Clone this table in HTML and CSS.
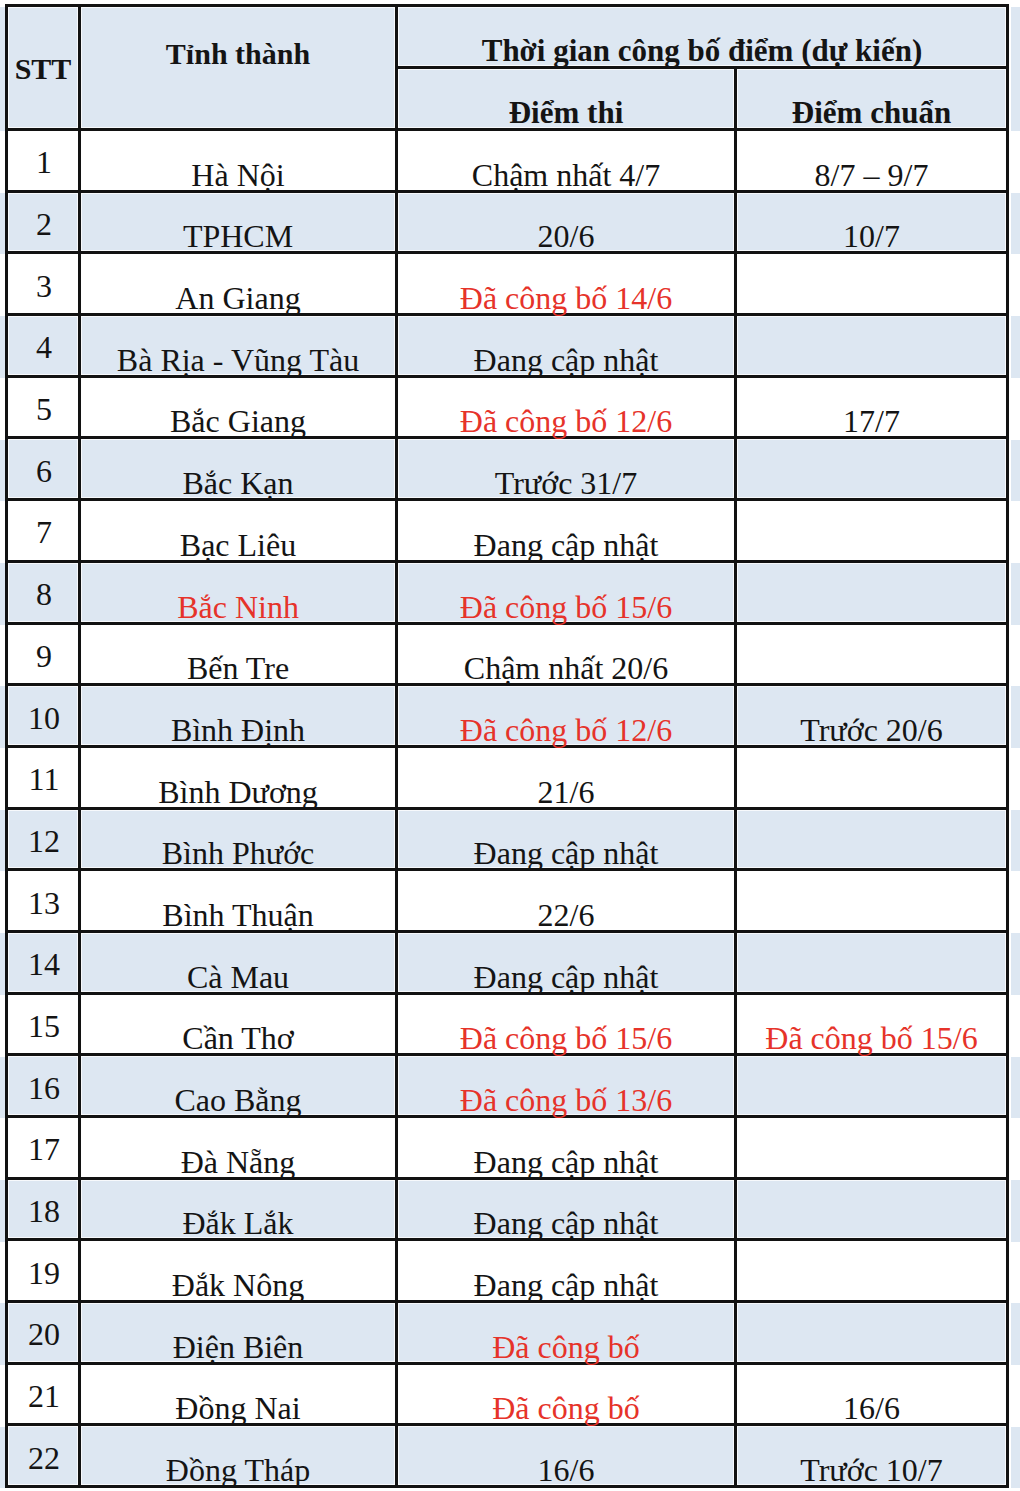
FILE: index.html
```html
<!DOCTYPE html>
<html lang="vi">
<head>
<meta charset="utf-8">
<title>Thời gian công bố điểm</title>
<link rel="stylesheet" href="styles.css">
</head>
<body>
<div class="sheet">
  <div class="cell head stt-head">STT</div>
  <div class="cell head city-head">Tỉnh thành</div>
  <div class="cell head time-head">Thời gian công bố điểm (dự kiến)</div>
  <div class="cell head sub-head">Điểm thi</div>
  <div class="cell head sub-head">Điểm chuẩn</div>

  <div class="cell num">1</div><div class="cell">Hà Nội</div><div class="cell">Chậm nhất 4/7</div><div class="cell">8/7 – 9/7</div>
  <div class="cell num alt">2</div><div class="cell alt">TPHCM</div><div class="cell alt">20/6</div><div class="cell alt">10/7</div>
  <div class="cell num">3</div><div class="cell">An Giang</div><div class="cell red">Đã công bố 14/6</div><div class="cell"></div>
  <div class="cell num alt">4</div><div class="cell alt">Bà Rịa - Vũng Tàu</div><div class="cell alt">Đang cập nhật</div><div class="cell alt"></div>
  <div class="cell num">5</div><div class="cell">Bắc Giang</div><div class="cell red">Đã công bố 12/6</div><div class="cell">17/7</div>
  <div class="cell num alt">6</div><div class="cell alt">Bắc Kạn</div><div class="cell alt">Trước 31/7</div><div class="cell alt"></div>
  <div class="cell num">7</div><div class="cell">Bạc Liêu</div><div class="cell">Đang cập nhật</div><div class="cell"></div>
  <div class="cell num alt">8</div><div class="cell alt red">Bắc Ninh</div><div class="cell alt red">Đã công bố 15/6</div><div class="cell alt"></div>
  <div class="cell num">9</div><div class="cell">Bến Tre</div><div class="cell">Chậm nhất 20/6</div><div class="cell"></div>
  <div class="cell num alt">10</div><div class="cell alt">Bình Định</div><div class="cell alt red">Đã công bố 12/6</div><div class="cell alt">Trước 20/6</div>
  <div class="cell num">11</div><div class="cell">Bình Dương</div><div class="cell">21/6</div><div class="cell"></div>
  <div class="cell num alt">12</div><div class="cell alt">Bình Phước</div><div class="cell alt">Đang cập nhật</div><div class="cell alt"></div>
  <div class="cell num">13</div><div class="cell">Bình Thuận</div><div class="cell">22/6</div><div class="cell"></div>
  <div class="cell num alt">14</div><div class="cell alt">Cà Mau</div><div class="cell alt">Đang cập nhật</div><div class="cell alt"></div>
  <div class="cell num">15</div><div class="cell">Cần Thơ</div><div class="cell red">Đã công bố 15/6</div><div class="cell red">Đã công bố 15/6</div>
  <div class="cell num alt">16</div><div class="cell alt">Cao Bằng</div><div class="cell alt red">Đã công bố 13/6</div><div class="cell alt"></div>
  <div class="cell num">17</div><div class="cell">Đà Nẵng</div><div class="cell">Đang cập nhật</div><div class="cell"></div>
  <div class="cell num alt">18</div><div class="cell alt">Đắk Lắk</div><div class="cell alt">Đang cập nhật</div><div class="cell alt"></div>
  <div class="cell num">19</div><div class="cell">Đắk Nông</div><div class="cell">Đang cập nhật</div><div class="cell"></div>
  <div class="cell num alt">20</div><div class="cell alt">Điện Biên</div><div class="cell alt red">Đã công bố</div><div class="cell alt"></div>
  <div class="cell num">21</div><div class="cell">Đồng Nai</div><div class="cell red">Đã công bố</div><div class="cell">16/6</div>
  <div class="cell num alt">22</div><div class="cell alt">Đồng Tháp</div><div class="cell alt">16/6</div><div class="cell alt">Trước 10/7</div>
</div>
</body>
</html>
```

FILE: styles.css
```css
html, body {
  margin: 0;
  padding: 0;
}

body {
  width: 1020px;
  height: 1491px;
  overflow: hidden;
  font-family: "Liberation Serif", "Times New Roman", serif;
  color: #141414;
  background-color: #fff;
  background-image:
    linear-gradient(to right, transparent 1009px, #fff 1009px, #fff 1011px, transparent 1011px),
    linear-gradient(to bottom, #fff 0, #fff 7px, #dde7f2 7px, #dde7f2 131px),
    repeating-linear-gradient(to bottom, #fff 0, #fff 61.7px, #dde7f2 61.7px, #dde7f2 123.4px);
  background-size: 100% 100%, 100% 131px, 100% 100%;
  background-position: 0 0, 0 0, 0 131px;
  background-repeat: no-repeat, no-repeat, repeat;
}

.sheet {
  margin: 4px 0 0 5px;
  width: 1004px;
  display: grid;
  grid-template-columns: 70px 314px 336px 269px;
  grid-template-rows: 59px 59px repeat(22, 58.7px);
  gap: 3px;
  padding: 3px;
  box-sizing: border-box;
  background: #121212;
}

.cell {
  background: #fff;
  display: flex;
  align-items: flex-end;
  justify-content: center;
  font-size: 32px;
  line-height: 30px;
  padding-bottom: 0;
  box-sizing: border-box;
  white-space: nowrap;
}

.cell.alt {
  background: #dde7f2;
  box-shadow: inset 0 0 0 1px rgba(255, 255, 255, 0.75);
}

.cell.num {
  align-items: center;
  padding-top: 4px;
  padding-left: 2px;
}

.cell.red {
  color: #e6332a;
}

.head {
  background: #dde7f2;
  box-shadow: inset 0 0 0 1px rgba(255, 255, 255, 0.75);
  font-weight: bold;
  font-size: 31px;
  line-height: 31px;
  padding-bottom: 0;
}

.stt-head {
  grid-row: 1 / 3;
  grid-column: 1;
  align-items: center;
  font-size: 30px;
  padding-top: 2px;
}

.city-head {
  grid-row: 1 / 3;
  grid-column: 2;
  align-items: flex-start;
  padding-top: 31px;
  font-size: 30px;
}

.time-head {
  grid-row: 1;
  grid-column: 3 / 5;
}

.sub-head {
  grid-row: 2;
}
```
